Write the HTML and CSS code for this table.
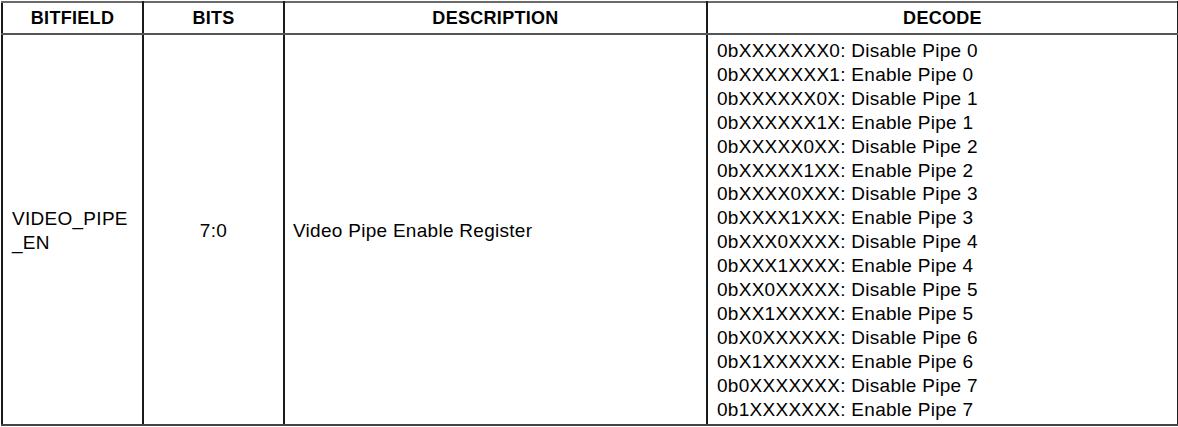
FILE: index.html
```html
<!DOCTYPE html>
<html>
<head>
<meta charset="utf-8">
<link rel="stylesheet" href="styles.css">
</head>
<body>
<table class="reg">
  <colgroup>
    <col class="c-field"><col class="c-bits"><col class="c-desc"><col class="c-decode">
  </colgroup>
  <thead>
    <tr><th>BITFIELD</th><th>BITS</th><th>DESCRIPTION</th><th>DECODE</th></tr>
  </thead>
  <tbody>
    <tr>
      <td class="field">VIDEO_PIPE<br>_EN</td>
      <td class="bits">7:0</td>
      <td class="desc">Video Pipe Enable Register</td>
      <td class="decode">
        <div>0bXXXXXXX0: Disable Pipe 0</div>
        <div>0bXXXXXXX1: Enable Pipe 0</div>
        <div>0bXXXXXX0X: Disable Pipe 1</div>
        <div>0bXXXXXX1X: Enable Pipe 1</div>
        <div>0bXXXXX0XX: Disable Pipe 2</div>
        <div>0bXXXXX1XX: Enable Pipe 2</div>
        <div>0bXXXX0XXX: Disable Pipe 3</div>
        <div>0bXXXX1XXX: Enable Pipe 3</div>
        <div>0bXXX0XXXX: Disable Pipe 4</div>
        <div>0bXXX1XXXX: Enable Pipe 4</div>
        <div>0bXX0XXXXX: Disable Pipe 5</div>
        <div>0bXX1XXXXX: Enable Pipe 5</div>
        <div>0bX0XXXXXX: Disable Pipe 6</div>
        <div>0bX1XXXXXX: Enable Pipe 6</div>
        <div>0b0XXXXXXX: Disable Pipe 7</div>
        <div>0b1XXXXXXX: Enable Pipe 7</div>
      </td>
    </tr>
  </tbody>
</table>
</body>
</html>
```

FILE: styles.css
```css
html, body {
  margin: 0;
  padding: 0;
  background: #fff;
}
body {
  padding: 1px 0 0 1px;
  font-family: "Liberation Sans", Arial, sans-serif;
  color: #000;
}
.reg {
  border-collapse: collapse;
  table-layout: fixed;
  width: 1176px;
}
.c-field { width: 141px; }
.c-bits { width: 141px; }
.c-desc { width: 423px; }
.c-decode { width: 471px; }

.reg th, .reg td {
  border: 2px solid #1a1a1a;
  padding: 0;
}
.reg th {
  height: 30px;
  font-size: 18px;
  font-weight: bold;
  letter-spacing: 0.3px;
  text-align: center;
  vertical-align: middle;
  border-top-color: #6a6a6a;
  border-bottom-color: #555;
}
.reg td {
  font-size: 19px;
  letter-spacing: 0.28px;
  line-height: 24px;
  vertical-align: middle;
  padding-top: 4px;
}
.field {
  padding-left: 9px !important;
  text-align: left;
}
.bits {
  text-align: center;
}
.desc {
  padding-left: 8px !important;
}
.decode {
  padding: 4px 0 2px 9px !important;
  line-height: 23.9px !important;
}
.reg tbody td {
  border-bottom-color: #444;
}
```
